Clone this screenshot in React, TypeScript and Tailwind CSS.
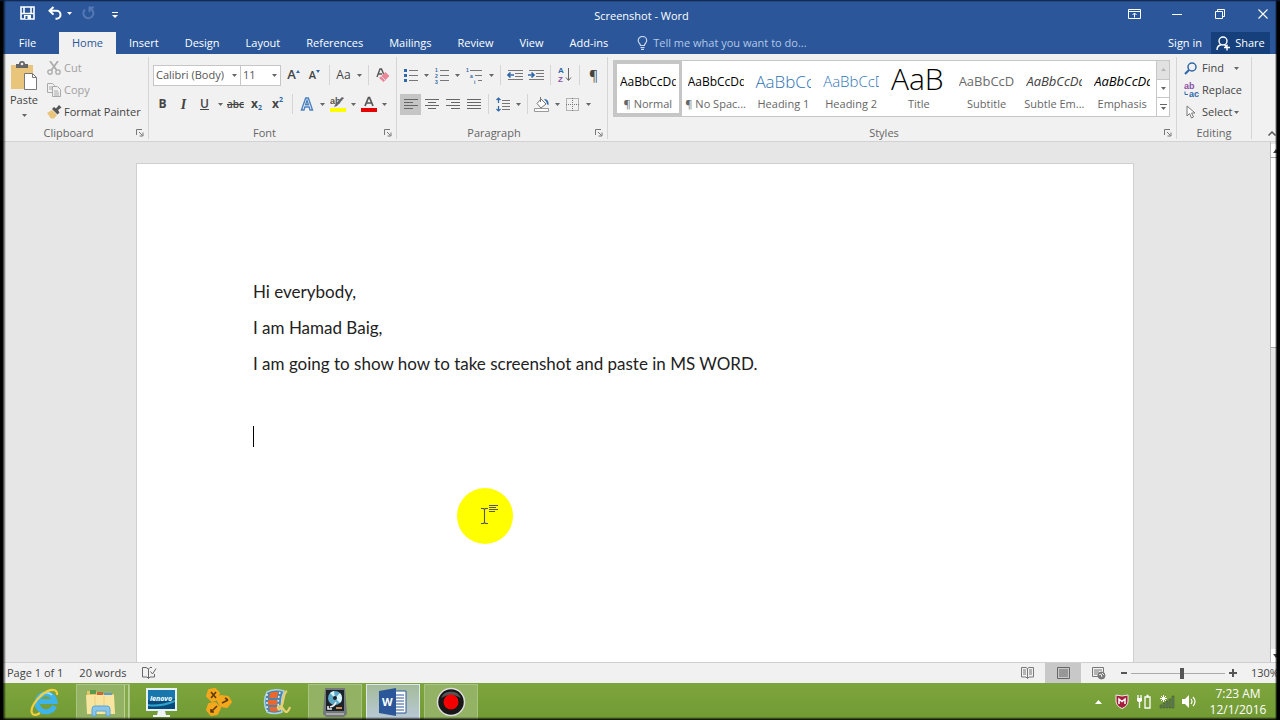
import type { ReactNode } from "react"

const Caret = ({ label }: { label: string }) => (
  <button aria-label={label} className="flex h-5 w-[10px] shrink-0 items-center justify-center">
    <svg width="5" height="3" viewBox="0 0 5 3"><path d="M0 0h5L2.5 3z" fill="#666" /></svg>
  </button>
)

const Sep = () => (
  <div className="flex h-5 w-2 shrink-0 justify-center">
    <div className="w-px bg-[#d5d5d5]" />
  </div>
)

const Tool = ({ label, active, wide, children }: { label: string; active?: boolean; wide?: boolean; children: ReactNode }) => (
  <button
    aria-label={label}
    className={`flex h-[21px] shrink-0 items-center justify-center ${wide ? "w-6" : "w-[21px]"} ${active ? "bg-[#c5c5c5]" : ""}`}
  >
    {children}
  </button>
)

const Lines = ({ rows }: { rows: number[][] }) => (
  <svg width="16" height="14" viewBox="0 0 16 14" stroke="#666" strokeWidth="1">
    {rows.map(([x1, x2], i) => (
      <path key={i} d={`M${x1} ${i * 3 + 2.5}H${x2}`} />
    ))}
  </svg>
)

const Group = ({ name, className, launcher, children }: { name: string; className: string; launcher?: boolean; children: ReactNode }) => (
  <section className={`flex flex-col pt-[3px] pb-[2px] ${className}`}>
    <div className="flex grow flex-col border-r border-[#d5d5d5]">
      <div className="h-[70px]">{children}</div>
      <div className={`flex h-3 items-center ${launcher ? "pr-1" : ""}`}>
        <h2 className={`grow text-center text-[11px] leading-3 text-[#666] ${launcher ? "pr-1" : ""}`}>{name}</h2>
        {launcher && (
          <button aria-label={`${name} settings`}>
            <svg width="8" height="8" viewBox="0 0 8 8" fill="none" stroke="#777">
              <path d="M.5 6V.5H6M3 3l3.5 3.5M7 3.5V7H3.5" />
            </svg>
          </button>
        )}
      </div>
    </div>
  </section>
)

const tabs = ["Insert", "Design", "Layout", "References", "Mailings", "Review", "View", "Add-ins"]

const styles = [
  { name: "¶ Normal", sample: "AaBbCcDd", cls: "pt-[3px] text-[12px] text-black" },
  { name: "¶ No Spac...", sample: "AaBbCcDd", cls: "pt-[3px] text-[12px] text-black" },
  { name: "Heading 1", sample: "AaBbCc", cls: "pt-[3px] text-[17px] font-light text-[#2e74b5]" },
  { name: "Heading 2", sample: "AaBbCcD", cls: "pt-[3px] text-[15px] font-light text-[#2e74b5]" },
  { name: "Title", sample: "AaB", cls: "pb-1 text-[30px] font-light text-black" },
  { name: "Subtitle", sample: "AaBbCcD", cls: "pt-[3px] text-[13px] text-[#6a6a6a]" },
  { name: "Subtle Em...", sample: "AaBbCcDd", cls: "pt-[3px] text-[13px] italic text-[#404040]" },
  { name: "Emphasis", sample: "AaBbCcDd", cls: "pt-[3px] text-[13px] italic text-black" },
]

const TitleBar = () => (
  <header className="flex h-8 items-center pr-[7px] pl-[10px] text-white">
    <div className="flex w-0 grow items-center pb-[6px]">
      <button aria-label="Save" className="ml-[10px]">
        <svg width="15" height="14" viewBox="0 0 15 14" fill="none" stroke="#fff" strokeWidth="2">
          <path d="M1 1h13v12H1zM1 7.5h13M4 7V1M11 7V1" strokeWidth="1.6" />
          <path d="M4 9h7v4H4z" fill="#fff" stroke="none" /><path d="M6.5 10v3" stroke="#2b579a" />
        </svg>
      </button>
      <button aria-label="Undo" className="ml-[13px]">
        <svg width="14" height="14" viewBox="0 0 14 14" fill="none" stroke="#fff" strokeWidth="2">
          <path d="M5.5 1L1.5 4.8l4 3.8M2 4.8h6.5a4 4 0 0 1 0 8H7.5" />
        </svg>
      </button>
      <button aria-label="Undo history" className="ml-[5px]">
        <svg width="5" height="3" viewBox="0 0 5 3"><path d="M0 0h5L2.5 3z" fill="#fff" /></svg>
      </button>
      <button aria-label="Repeat" className="ml-[10px]">
        <svg width="13" height="14" viewBox="0 0 13 14" fill="none" stroke="#5478b3" strokeWidth="2">
          <path d="M8 2.5A5 5 0 1 1 3 3.5M7.5 6V1.5H12" />
        </svg>
      </button>
      <button aria-label="Customize toolbar" className="ml-[17px] pt-1">
        <svg width="6" height="6" viewBox="0 0 6 6" fill="#fff"><path d="M0 0h6v1H0zM0 3h6L3 6z" /></svg>
      </button>
    </div>
    <h1 className="text-[11px]">Screenshot - Word</h1>
    <div className="flex w-0 grow items-center justify-end gap-[23px] pb-[5px]">
      <button aria-label="Ribbon display options" className="flex w-5 justify-center">
        <svg width="13" height="10" viewBox="0 0 13 10" fill="none" stroke="#fff"><path d="M.5.5h12v9H.5zM.5 2.5h12M6.5 8.5v-4M4.5 6l2-2 2 2" /></svg>
      </button>
      <button aria-label="Minimize" className="flex w-5 justify-center">
        <svg width="10" height="10" viewBox="0 0 10 10" stroke="#fff"><path d="M0 5.5h10" /></svg>
      </button>
      <button aria-label="Restore" className="flex w-5 justify-center">
        <svg width="10" height="10" viewBox="0 0 10 10" fill="none" stroke="#fff"><path d="M.5 2.5h7v7h-7zM2.5 2.5v-2h7v7h-2" /></svg>
      </button>
      <button aria-label="Close" className="flex w-5 justify-center">
        <svg width="10" height="10" viewBox="0 0 10 10" stroke="#fff" strokeWidth="1.1"><path d="M.5.5l9 9M9.5.5l-9 9" /></svg>
      </button>
    </div>
  </header>
)

const TabBar = () => (
  <nav className="flex h-[22px] items-center pr-[10px] pl-[5px] text-[11px] text-white">
    <button className="w-[54px] pr-[9px]">File</button>
    <button className="h-full w-[57px] bg-[#f1f1f1] text-[#2b579a]">Home</button>
    {tabs.map((tab) => (
      <button key={tab} className="px-[13px]">{tab}</button>
    ))}
    <label className="ml-4 flex grow items-center gap-[5px]">
      <svg width="11" height="14" viewBox="0 0 11 14" fill="none" stroke="#c9d8ef" strokeWidth="1.2">
        <path d="M3.5 9.5C3.5 7.5 1.2 7 1.2 4.5a4.2 4 0 0 1 8.5 0c0 2.5-2.3 3-2.3 5zM3.5 11.5h4M4 13.3h3" />
      </svg>
      <input aria-label="Tell me what you want to do" placeholder="Tell me what you want to do..." className="w-[200px] bg-transparent outline-none placeholder:text-[#b4c7e7]" />
    </label>
    <button className="mr-[9px]">Sign in</button>
    <button className="flex h-full w-[59px] items-center justify-center gap-1 bg-[#15407b]">
      <svg width="15" height="15" viewBox="0 0 15 15" fill="none" stroke="#fff" strokeWidth="1.4">
        <circle cx="7" cy="5" r="4" /><path d="M1 14c0-3 2-5 4.5-5.3M8.5 8.7l2 2M11 8.5v6M8 11.5h6" />
      </svg>
      Share
    </button>
  </nav>
)

const Clipboard = () => (
  <Group name="Clipboard" className="w-[144px]" launcher>
    <div className="flex">
      <button className="flex w-[38px] flex-col items-center pt-1">
        <svg width="28" height="30" viewBox="0 0 28 30">
          <path d="M1 4h22v24H1z" fill="#e8c57b" />
          <path d="M6 7V3h3a3 3 0 0 1 6 0h3v4z" fill="#666" /><circle cx="12" cy="3" r="1.3" fill="#f1f1f1" />
          <path d="M14.5 12.5h8l4 4v12h-12z" fill="#fff" stroke="#777" /><path d="M22.5 12.5v4h4" fill="none" stroke="#777" />
        </svg>
        <span className="mt-px text-[11px] leading-4">Paste</span>
        <svg className="mt-[6px]" width="5" height="3" viewBox="0 0 5 3"><path d="M0 0h5L2.5 3z" fill="#666" /></svg>
      </button>
      <div className="flex flex-col pl-1 text-[11px]">
        <button className="flex h-[22px] items-center gap-[3px] text-[#a0a0a0]">
          <svg width="14" height="14" viewBox="0 0 14 14" fill="none" stroke="#aaa" strokeWidth="1.3">
            <path d="M3 0l6.5 9M11 0L4.5 9" strokeWidth="1.7" /><circle cx="3" cy="11" r="2.2" /><circle cx="11" cy="11" r="2.2" />
          </svg>
          Cut
        </button>
        <button className="flex h-[22px] items-center gap-[3px] text-[#a0a0a0]">
          <svg width="14" height="14" viewBox="0 0 14 14" fill="#f1f1f1" stroke="#aaa">
            <path d="M.5.5h5l2 2v7h-7zM2 4h4M2 6h4" /><path d="M5.5 3.5h5l3 3v7h-8zM7 8h4M7 10h5M7 12h5" />
          </svg>
          Copy
        </button>
        <button className="flex h-[22px] items-center gap-[2px]">
          <svg width="15" height="14" viewBox="0 0 15 14">
            <path d="M0 8l5-3 5 5-3 3.5H4z" fill="#e8c57b" /><path d="M5 4l2-2 2 1.5L12 0l2.5 2.5L11 5l1.5 2.5-2 2z" fill="#555" />
          </svg>
          Format Painter
        </button>
      </div>
    </div>
  </Group>
)

const Select = ({ label, options, className }: { label: string; options: string[]; className: string }) => (
  <div className={`relative h-[21px] ${className}`}>
    <select aria-label={label} className="block h-full w-full appearance-none border border-[#c6c6c6] bg-white pl-[2px] text-[11px] leading-4 text-[#555]">
      {options.map((o) => <option key={o}>{o}</option>)}
    </select>
    <svg className="pointer-events-none absolute top-[9px] right-1" width="5" height="3" viewBox="0 0 5 3"><path d="M0 0h5L2.5 3z" fill="#666" /></svg>
  </div>
)

const FontGroup = () => (
  <Group name="Font" className="w-[248px]" launcher>
    <div className="flex h-9 items-center pl-1">
      <Select label="Font" options={["Calibri (Body)", "Arial"]} className="w-[88px]" />
      <Select label="Font size" options={["11", "12", "14"]} className="-ml-px mr-[2px] w-[41px]" />
      <Tool label="Grow font"><span className="text-[13px] font-semibold">A</span><svg className="mb-2" width="4" height="3" viewBox="0 0 4 3"><path d="M0 3h4L2 0z" fill="#2f68a8" /></svg></Tool>
      <Tool label="Shrink font"><span className="text-[11px] font-semibold">A</span><svg className="mb-2" width="4" height="3" viewBox="0 0 4 3"><path d="M0 0h4L2 3z" fill="#2f68a8" /></svg></Tool>
      <Sep />
      <Tool label="Change case"><span className="text-[12px]">Aa</span></Tool>
      <Caret label="Change case options" />
      <Sep />
      <Tool label="Clear formatting">
        <svg width="14" height="15" viewBox="0 0 14 15"><path d="M1 9L4 1h1.5L8 7M2.3 6H6" fill="none" stroke="#555" strokeWidth="1.4" /><path d="M9.5 4L13.5 8 7.5 14 3 10z" fill="#e8899a" /><path d="M5 8l4.5 4.5" stroke="#f8d5db" /></svg>
      </Tool>
    </div>
    <div className="flex h-[22px] items-center pl-[3px]">
      <Tool label="Bold"><b className="text-[12px]">B</b></Tool>
      <Tool label="Italic"><i className="font-['Liberation_Serif'] text-[14px] font-bold">I</i></Tool>
      <Tool label="Underline"><u className="text-[12px] font-semibold">U</u></Tool>
      <Caret label="Underline options" />
      <Tool label="Strikethrough"><s className="text-[10px] font-semibold">abc</s></Tool>
      <Tool label="Subscript"><b className="text-[12px]">x</b><span className="mt-2 text-[7px] font-bold text-[#2f68a8]">2</span></Tool>
      <Tool label="Superscript"><b className="text-[12px]">x</b><span className="mb-2 text-[7px] font-bold text-[#2f68a8]">2</span></Tool>
      <Sep />
      <Tool label="Text effects">
        <svg width="14" height="14" viewBox="0 0 13 14" fill="#fff" stroke="#4c82be" strokeWidth="1.4"><path d="M1 13L5.2 1h2.6L12 13H9.5L8.7 10H4.3L3.5 13zM5 7.8h3L6.5 3.5z" /></svg>
      </Tool>
      <Caret label="Text effects options" />
      <Tool label="Highlight">
        <svg width="16" height="16" viewBox="0 0 16 16" overflow="visible"><text x="0" y="8" fontFamily="Liberation Sans" fontSize="9" fontWeight="700" fill="#555">ab</text><path d="M14 2L7 10l-3 1 1.5-3L12 1z" fill="#666" /><path d="M0 12h16v4H0z" fill="#ff0" /></svg>
      </Tool>
      <Caret label="Highlight options" />
      <Tool label="Font color">
        <svg width="16" height="16" viewBox="0 0 16 16"><path d="M4 10L7.5 1.5h1L12 10M5.5 7h5" fill="none" stroke="#555" strokeWidth="1.7" /><path d="M0 12h16v4H0z" fill="#e60000" /></svg>
      </Tool>
      <Caret label="Font color options" />
    </div>
  </Group>
)

const Paragraph = () => (
  <Group name="Paragraph" className="w-[211px]" launcher>
    <div className="flex h-9 items-center pl-[3px]">
      <Tool label="Bullets">
        <svg width="14" height="14" viewBox="0 0 14 14"><path d="M0 1h3v3H0zM0 6h3v3H0zM0 11h3v3H0z" fill="#2f68a8" /><path d="M5 2.5h9M5 7.5h9M5 12.5h9" stroke="#777" /></svg>
      </Tool>
      <Caret label="Bullet options" />
      <Tool label="Numbering">
        <svg width="14" height="15" viewBox="0 0 14 15" overflow="visible"><g fontFamily="Liberation Sans" fontSize="5" fontWeight="700" fill="#2f68a8"><text x="0" y="4">1</text><text x="0" y="10">2</text><text x="0" y="16">3</text></g><path d="M5 2.5h9M5 7.5h9M5 12.5h9" stroke="#777" /></svg>
      </Tool>
      <Caret label="Numbering options" />
      <Tool label="Multilevel list" wide>
        <svg width="16" height="15" viewBox="0 0 16 15" overflow="visible"><g fontFamily="Liberation Sans" fontSize="5" fontWeight="700" fill="#2f68a8"><text x="0" y="4">1</text><text x="4" y="10">a</text><text x="8" y="16">i</text></g><path d="M4 2.5h12M9 7.5h7M12 12.5h4" stroke="#777" /></svg>
      </Tool>
      <Caret label="Multilevel options" />
      <Sep />
      <Tool label="Decrease indent">
        <svg width="16" height="13" viewBox="0 0 16 13"><path d="M1 1.5h15M8 4.5h8M8 7.5h8M1 10.5h15" stroke="#777" /><path d="M7 6H1M3.5 3.5L1 6l2.5 2.5" stroke="#2f68a8" strokeWidth="1.7" fill="none" /></svg>
      </Tool>
      <Tool label="Increase indent">
        <svg width="16" height="13" viewBox="0 0 16 13"><path d="M1 1.5h15M8 4.5h8M8 7.5h8M1 10.5h15" stroke="#777" /><path d="M0 6h6M3.5 3.5L6 6 3.5 8.500" stroke="#2f68a8" strokeWidth="1.7" fill="none" /></svg>
      </Tool>
      <Sep />
      <Tool label="Sort">
        <svg width="14" height="16" viewBox="0 0 14 16" overflow="visible"><g fontFamily="Liberation Sans" fontSize="8" fontWeight="700"><text x="0" y="6" fill="#2f68a8">A</text><text x="0" y="15" fill="#8a4fa8">Z</text></g><path d="M10.5 1v12M8 10.5l2.5 3 2.5-3" fill="none" stroke="#666" /></svg>
      </Tool>
      <Sep />
      <Tool label="Show marks"><span className="text-[14px]">¶</span></Tool>
    </div>
    <div className="flex h-[22px] items-center pl-[3px]">
      <Tool label="Align left" active><Lines rows={[[1, 15], [1, 10], [1, 15], [1, 10]]} /></Tool>
      <Tool label="Center"><Lines rows={[[1, 15], [4, 12], [1, 15], [4, 12]]} /></Tool>
      <Tool label="Align right"><Lines rows={[[1, 15], [6, 15], [1, 15], [6, 15]]} /></Tool>
      <Tool label="Justify"><Lines rows={[[1, 15], [1, 15], [1, 15], [1, 15]]} /></Tool>
      <Sep />
      <Tool label="Line spacing">
        <svg width="14" height="15" viewBox="0 0 14 15" fill="none"><path d="M6 3.5h8M6 6.5h8M6 9.5h8M6 12.5h8" stroke="#777" /><path d="M2.5 1v5M.5 3l2-2 2 2M2.5 9v5M.5 12l2 2 2-2" stroke="#2f68a8" strokeWidth="1.2" /></svg>
      </Tool>
      <Caret label="Line spacing options" />
      <Sep />
      <Tool label="Shading">
        <svg width="16" height="16" viewBox="0 0 16 16"><path d="M7 3l5 5-5 4-4-4.5zM6.5 6V1" fill="#fff" stroke="#777" /><path d="M10 3c3 0 5 2 4.5 6-1 0-2-1-2-3z" fill="#2f68a8" /><path d="M.5 12.5h14v3H.5z" fill="#fff" stroke="#999" /></svg>
      </Tool>
      <Caret label="Shading options" />
      <Tool label="Borders">
        <svg width="13" height="13" viewBox="0 0 13 13" fill="none" stroke="#777"><path d="M.5.5h12v12H.5zM6.5 0v13M0 6.5h13" strokeDasharray="1 1" /></svg>
      </Tool>
      <Caret label="Border options" />
    </div>
  </Group>
)

const Styles = () => (
  <Group name="Styles" className="min-w-0 flex-1" launcher>
    <div className="mt-[3px] mr-[6px] ml-[5px] flex h-[57px] border border-[#c6c6c6] bg-white">
      {styles.map((s, i) => (
        <button key={s.name} className={`flex min-w-0 flex-1 flex-col items-center border-[3px] ${i === 0 ? "border-[#c6c6c6]" : "border-transparent"}`}>
          <span className={`flex h-8 w-14 items-center overflow-hidden whitespace-nowrap ${s.cls}`}>{s.sample}</span>
          <span className="text-[11px] leading-4 whitespace-nowrap text-[#666]">{s.name}</span>
        </button>
      ))}
      <div className="flex w-[13px] flex-col border-l border-[#c6c6c6]">
        <button aria-label="Previous styles" className="flex flex-1 items-center justify-center bg-[#e1e1e1]"><svg width="5" height="3" viewBox="0 0 5 3"><path d="M0 3h5L2.5 0z" fill="#b5b5b5" /></svg></button>
        <button aria-label="Next styles" className="flex flex-1 items-center justify-center border-y border-[#c6c6c6]"><svg width="5" height="3" viewBox="0 0 5 3"><path d="M0 0h5L2.5 3z" fill="#666" /></svg></button>
        <button aria-label="All styles" className="flex flex-1 items-center justify-center"><svg width="7" height="6" viewBox="0 0 7 6" fill="#666"><path d="M0 0h7v1H0zM1 3h5L3.5 6z" /></svg></button>
      </div>
    </div>
  </Group>
)

const Editing = () => (
  <Group name="Editing" className="w-[75px]">
    <div className="flex flex-col pl-[7px] text-[11px]">
      <button className="flex h-[22px] items-center gap-[5px]">
        <svg width="13" height="13" viewBox="0 0 13 13" fill="none" stroke="#2f68a8"><circle cx="8" cy="5" r="4" strokeWidth="1.5" /><path d="M5 8l-4 4" strokeWidth="2.2" /></svg>
        Find
        <svg className="ml-[5px]" width="5" height="3" viewBox="0 0 5 3"><path d="M0 0h5L2.5 3z" fill="#666" /></svg>
      </button>
      <button className="flex h-[22px] items-center gap-[3px]">
        <svg width="15" height="15" viewBox="0 0 15 15" overflow="visible" fontFamily="Liberation Sans" fontSize="9" fontWeight="700"><text x="0" y="6" fill="#8a4fa8">ab</text><text x="5" y="14" fill="#2f68a8">ac</text><path d="M1 8.5v3h3" fill="none" stroke="#2f68a8" /></svg>
        Replace
      </button>
      <button className="flex h-[22px] items-center gap-[5px]">
        <svg className="ml-[2px]" width="11" height="14" viewBox="0 0 11 14"><path d="M1 1v10l2.5-2.5L5.5 13l2-1-2-4H9z" fill="#fff" stroke="#777" /></svg>
        Select
        <svg className="-ml-[3px]" width="5" height="3" viewBox="0 0 5 3"><path d="M0 0h5L2.5 3z" fill="#666" /></svg>
      </button>
    </div>
  </Group>
)

const Document = () => (
  <main className="flex min-h-0 flex-1 bg-[#e6e6e6]">
    <div className="flex flex-1 justify-center overflow-hidden pt-[21px]">
      <article className="relative w-[998px] border border-b-0 border-[#cfcfcf] bg-white px-[116px] pt-[110px] font-['Lato',sans-serif] text-[17px] leading-9 text-[#222]">
        <p>Hi everybody,</p>
        <p>I am Hamad Baig,</p>
        <p>I am going to show how to take screenshot and paste in MS WORD.</p>
        <p>&nbsp;</p>
        <p className="flex h-9 items-center"><span className="h-[21px] w-px bg-black" /></p>
        <div className="absolute top-[324px] left-[320px] flex h-14 w-14 items-center justify-center rounded-full bg-[#ff0]">
          <svg width="18" height="24" viewBox="0 -4 18 24" className="ml-2" fill="none" stroke="#555">
            <path d="M1 .5h2.5l1 1 1-1H8M4.5 1v14M1 15.5h2.5l1-1 1 1H8" strokeWidth="1.1" />
            <path d="M9 -2.500h9M9 -.5h7M9 1.5h9M9 3.5h6" />
          </svg>
        </div>
      </article>
    </div>
    <div className="flex w-[10px] flex-col border-l border-[#bbb] pt-[2px]">
      <button aria-label="Scroll up" className="flex h-[13px] items-center bg-white pl-[2px]"><svg width="6" height="4" viewBox="0 0 6 4"><path d="M0 4h6L3 0z" fill="#444" /></svg></button>
      <div className="h-[191px] border-y border-[#aaa] bg-white" />
      <div className="grow" />
      <button aria-label="Scroll down" className="flex h-[13px] items-center bg-white pl-[2px]"><svg width="6" height="4" viewBox="0 0 6 4"><path d="M0 0h6L3 4z" fill="#444" /></svg></button>
    </div>
  </main>
)

const StatusBar = () => (
  <footer className="flex h-[21px] shrink-0 items-center overflow-hidden border-t border-[#cfcfcf] bg-[#f1f1f1] pl-[7px] text-[11px] whitespace-nowrap">
    <span>Page 1 of 1</span>
    <span className="ml-4">20 words</span>
    <button aria-label="Proofing" className="ml-4">
      <svg width="15" height="12" viewBox="0 0 15 12" fill="none" stroke="#666"><path d="M6.5 2v9.5L5 10H.5V.5H4zM6.5 2L8 .5h2M6.5 11.5L8 10h4.5V7M8.5 4.5l2 2.5L14 1.5" /></svg>
    </button>
    <div className="grow" />
    <button aria-label="Read mode" className="flex w-9 justify-center">
      <svg width="13" height="12" viewBox="0 0 13 12" fill="none" stroke="#777"><path d="M6.5 1.5v10L5 10H.5V.5H5zl1.5-1h4.5V10H8l-1.5 1.5M2 3h3M2 5h3M2 7h3M8 3h3M8 5h3M8 7h3" /></svg>
    </button>
    <button aria-label="Print layout" className="flex h-full w-9 items-center justify-center bg-[#c8c8c8]">
      <svg width="13" height="12" viewBox="0 0 13 12" fill="none" stroke="#666"><path d="M.5.5h12v11H.5zM2 3h9M2 5h9M2 7h9M2 9h9" /></svg>
    </button>
    <button aria-label="Web layout" className="flex w-9 justify-center">
      <svg width="14" height="13" viewBox="0 0 14 13" fill="none" stroke="#777"><path d="M6 9.5H.5V.5h11V5M2 3h8M2 5h5M2 7h4" /><circle cx="9.5" cy="8.5" r="3.5" fill="#777" /><path d="M7 8l2-1 1 3M10 6l2 2" stroke="#eee" /></svg>
    </button>
    <button aria-label="Zoom out" className="ml-1"><svg width="6" height="6" viewBox="0 0 6 6"><path d="M0 2h6v2H0z" fill="#555" /></svg></button>
    <input
      type="range"
      aria-label="Zoom"
      min={0}
      max={100}
      defaultValue={54}
      className="mx-1 h-3 w-[94px] appearance-none bg-[linear-gradient(#aaa,#aaa)] bg-[length:100%_1px] bg-center bg-no-repeat [&::-webkit-slider-thumb]:h-[11px] [&::-webkit-slider-thumb]:w-1 [&::-webkit-slider-thumb]:appearance-none [&::-webkit-slider-thumb]:bg-[#555]"
    />
    <button aria-label="Zoom in"><svg width="8" height="8" viewBox="0 0 8 8"><path d="M0 3h8v2H0zM3 0h2v8H3z" fill="#555" /></svg></button>
    <span className="ml-[14px] w-[29px]">130%</span>
  </footer>
)

const TaskButton = ({ label, state, stacked, children }: { label: string; state?: "open" | "active"; stacked?: boolean; children: ReactNode }) => (
  <button
    aria-label={label}
    className={`flex h-9 w-[54px] items-center justify-center border ${
      state === "active" ? "border-[#dfe8ea] bg-linear-to-b from-[#a4bb9a] to-[#b9c9d6]" : state === "open" ? "border-[#a7c480] bg-[#93b263]" : "border-transparent"
    }`}
  >
    <span className="flex grow justify-center">{children}</span>
    {stacked && <span className="h-full w-[5px] border-x border-[#b9d293] bg-[#85a94d]" />}
  </button>
)

const TaskBar = () => (
  <footer className="flex h-[37px] shrink-0 items-center bg-linear-to-b from-[#7ea53d] to-[#719a34] pl-[18px] text-white">
    <div className="flex grow gap-1">
      <TaskButton label="Internet Explorer">
        <svg width="30" height="30" viewBox="0 0 30 30" fill="none">
          <path d="M24.5 19a9 9 0 1 1 .5-4.5H10" stroke="#3fb4ea" strokeWidth="5" />
          <path d="M22 8a8 8 0 0 0-12 1" stroke="#a5e6fb" strokeWidth="1.5" />
          <path d="M27 8C28 2 21 1 13 7 5 13 0 22 2 26c1 3 5 2 8 0" stroke="#f3cf3f" strokeWidth="2.2" />
        </svg>
      </TaskButton>
      <TaskButton label="File Explorer" state="open" stacked>
        <svg width="32" height="30" viewBox="0 0 32 30">
          <path d="M2 4h9l2 3h16v20H2z" fill="#e5c565" /><path d="M5 3h6v4H5z" fill="#5a9a48" /><path d="M12 5h6v4h-6z" fill="#c8663d" /><path d="M19 6h8v3h-8z" fill="#5c9bd1" />
          <path d="M1 8h28l1 19H2z" fill="#f8e6a0" /><path d="M10 9v17M19 9v17" stroke="#ecd07c" /><path d="M7 29v-7q0-3 3-3h12q3 0 3 3v7h-4v-5H11v5z" fill="#89c5e8" stroke="#5ba4d3" />
        </svg>
      </TaskButton>
      <TaskButton label="Lenovo">
        <svg width="31" height="30" viewBox="0 0 31 30">
          <path d="M0 1h31v23H0z" fill="#e8f1f5" /><path d="M2 3h27v19H2z" fill="#1877ac" /><path d="M2 13q12 3 27-1v10H2z" fill="#064a7c" /><path d="M2 17q10 2 27-4v2q-14 6-27 4z" fill="#2fa3cc" /><path d="M12 24h7l1 4h4v2H7v-2h4z" fill="#eef3f5" />
          <text x="4" y="14" fontSize="7" fontWeight="700" fontStyle="italic" fill="#fff">lenovo</text>
        </svg>
      </TaskButton>
      <TaskButton label="Tools">
        <svg width="28" height="30" viewBox="0 0 28 30" fill="#f5a81d" stroke="#f5a81d" strokeWidth="2" strokeLinejoin="round">
          <path d="M4 3l6-1 4 4-1 6-6 2-5-5zM16 9l7 1 3 5-4 5-6-1-3-5zM4 17l6-1 5 5-3 6-6 1-4-5z" />
          <path d="M6 5l5 6M11 5l-5 6M17 16l6-3M20 11l3 2M6 25l6-6M6 22v3h3" stroke="#5c3b08" strokeWidth="1.6" fill="none" />
        </svg>
      </TaskButton>
      <TaskButton label="Movie Maker">
        <svg width="30" height="26" viewBox="0 0 30 26">
          <path d="M5 3q8-4 17-1-4 10-2 21-8 3-15 0-5-10 0-20z" fill="#4d83a8" stroke="#acd2e3" strokeWidth="1.5" />
          <path d="M8 4q4-2 8-1l-1 6H7zM6 11h9v5H6zM7 18h8l1 4q-5 1-8 0z" fill="#ec672d" /><path d="M5 5v17M18 3q-3 9-1 19" fill="none" stroke="#dcebf2" strokeWidth="1.6" strokeDasharray="2 2" />
          <path d="M25 2c-4 2-3 9-5 14s-3 6-4 3 4-2 6 2 5 1 6-3" fill="none" stroke="#e8d171" strokeWidth="2.2" />
        </svg>
      </TaskButton>
      <TaskButton label="Disk Tool" state="open">
        <svg width="24" height="30" viewBox="0 0 24 30">
          <path d="M2 1h20l2 26-3 3H3l-3-3z" fill="#73787b" /><path d="M3 3h18v21H3z" fill="#1b2328" /><circle cx="12" cy="11" r="7" fill="#5ea8c8" /><path d="M12 11l5-5a7 7 0 0 1 0 10zM12 11L7 6a7 7 0 0 1 4-2z" fill="#d7f4fa" /><circle cx="12" cy="11" r="2" fill="#1b2328" />
          <path d="M13 15q-1 4-6 5M5 19v3h4" stroke="#eee" strokeWidth="1.6" fill="none" /><path d="M13 21h6" stroke="#d08a50" strokeWidth="2" /><path d="M3 27h18" stroke="#aaa" strokeWidth="2" />
        </svg>
      </TaskButton>
      <TaskButton label="Word" state="active">
        <svg width="30" height="30" viewBox="0 0 30 30">
          <path d="M15 4h13v22H15z" fill="#fff" stroke="#2b579a" /><path d="M18 8h8M18 11h8M18 14h8M18 17h8M18 20h8M18 23h8" stroke="#2b579a" />
          <path d="M1 4l17-3v28L1 26z" fill="#2b579a" /><text x="4" y="19" fontSize="11" fontWeight="700" fill="#fff">W</text>
        </svg>
      </TaskButton>
      <TaskButton label="Recorder" state="open">
        <svg width="30" height="30" viewBox="0 0 30 30"><circle cx="15" cy="15" r="13.5" fill="#171717" stroke="#ddd" strokeWidth="1.5" /><path d="M5 11a11 11 0 0 1 20 0q-10-6-20 0z" fill="#555" /><circle cx="15" cy="15" r="7.5" fill="#f50000" /></svg>
      </TaskButton>
    </div>
    <div className="flex items-center gap-[7px]">
      <button aria-label="Show hidden icons" className="mr-[6px]"><svg width="7" height="4" viewBox="0 0 7 4"><path d="M0 4h7L3.5 0z" fill="#fff" /></svg></button>
      <svg width="14" height="15" viewBox="0 0 14 15"><path d="M1 1l6 1 6-1v6q0 5-6 7.5Q1 12 1 7z" fill="#a51e3a" stroke="#eee" /><path d="M4 10V5l3 2.5L10 5v5" fill="none" stroke="#fff" strokeWidth="1.5" /></svg>
      <svg width="16" height="15" viewBox="0 0 16 15" fill="none" stroke="#fff" strokeWidth="1.3"><path d="M9 3h5v11H9zM10.5 1.5h2M2 1v3M5 1v3M3.500 8v6" /><path d="M1 4h5v3L4.500 8h-2L1 7z" fill="#fff" stroke="none" /></svg>
      <svg width="16" height="14" viewBox="0 0 16 14"><path d="M1 10h2v3H1zM4 8h2v5H4zM7 6h2v7H7zM10 4h2v9h-2zM13 1h2v12h-2z" fill="#65805b" stroke="#35502a" strokeWidth=".5" /><path d="M4.500 0v7M1 3.500h7M2 1l5 5M7 1L2 6" stroke="#fff" /></svg>
      <svg width="14" height="13" viewBox="0 0 14 13"><path d="M0 4h3l4-4v13L3 9H0z" fill="#fff" /><path d="M9 4q2 2.5 0 5M11 2q4 4.5 0 9" fill="none" stroke="#fff" strokeWidth="1.2" /></svg>
    </div>
    <time className="w-[84px] text-center text-[12px] leading-4">7:23 AM<br />12/1/2016</time>
  </footer>
)

export default function App() {
  return (
    <div className="relative flex h-screen flex-col overflow-hidden bg-[#2b579a] font-['Open_Sans',sans-serif] text-[#444]">
      <TitleBar />
      <TabBar />
      <div className="flex h-[88px] shrink-0 border-b border-[#d2d2d2] bg-[#f1f1f1] pl-[5px]">
        <Clipboard />
        <FontGroup />
        <Paragraph />
        <Styles />
        <Editing />
        <button aria-label="Collapse ribbon" className="flex w-7 items-end justify-end pr-1 pb-[5px]">
          <svg width="8" height="5" viewBox="0 0 8 5" fill="none" stroke="#555" strokeWidth="1.5"><path d="M.5 4.5L4 1l3.5 3.5" /></svg>
        </button>
      </div>
      <Document />
      <StatusBar />
      <TaskBar />
      <div className="pointer-events-none absolute inset-y-0 left-0 w-[6px] bg-linear-to-r from-black from-40% to-transparent" />
      <div className="pointer-events-none absolute inset-y-0 right-0 w-[5px] bg-linear-to-l from-black from-60% to-transparent" />
      <div className="pointer-events-none absolute inset-x-0 top-0 h-[2px] bg-linear-to-b from-[#0a1c3c] to-transparent" />
      <div className="pointer-events-none absolute inset-x-0 bottom-0 h-[3px] bg-linear-to-t from-black to-transparent" />
    </div>
  )
}
